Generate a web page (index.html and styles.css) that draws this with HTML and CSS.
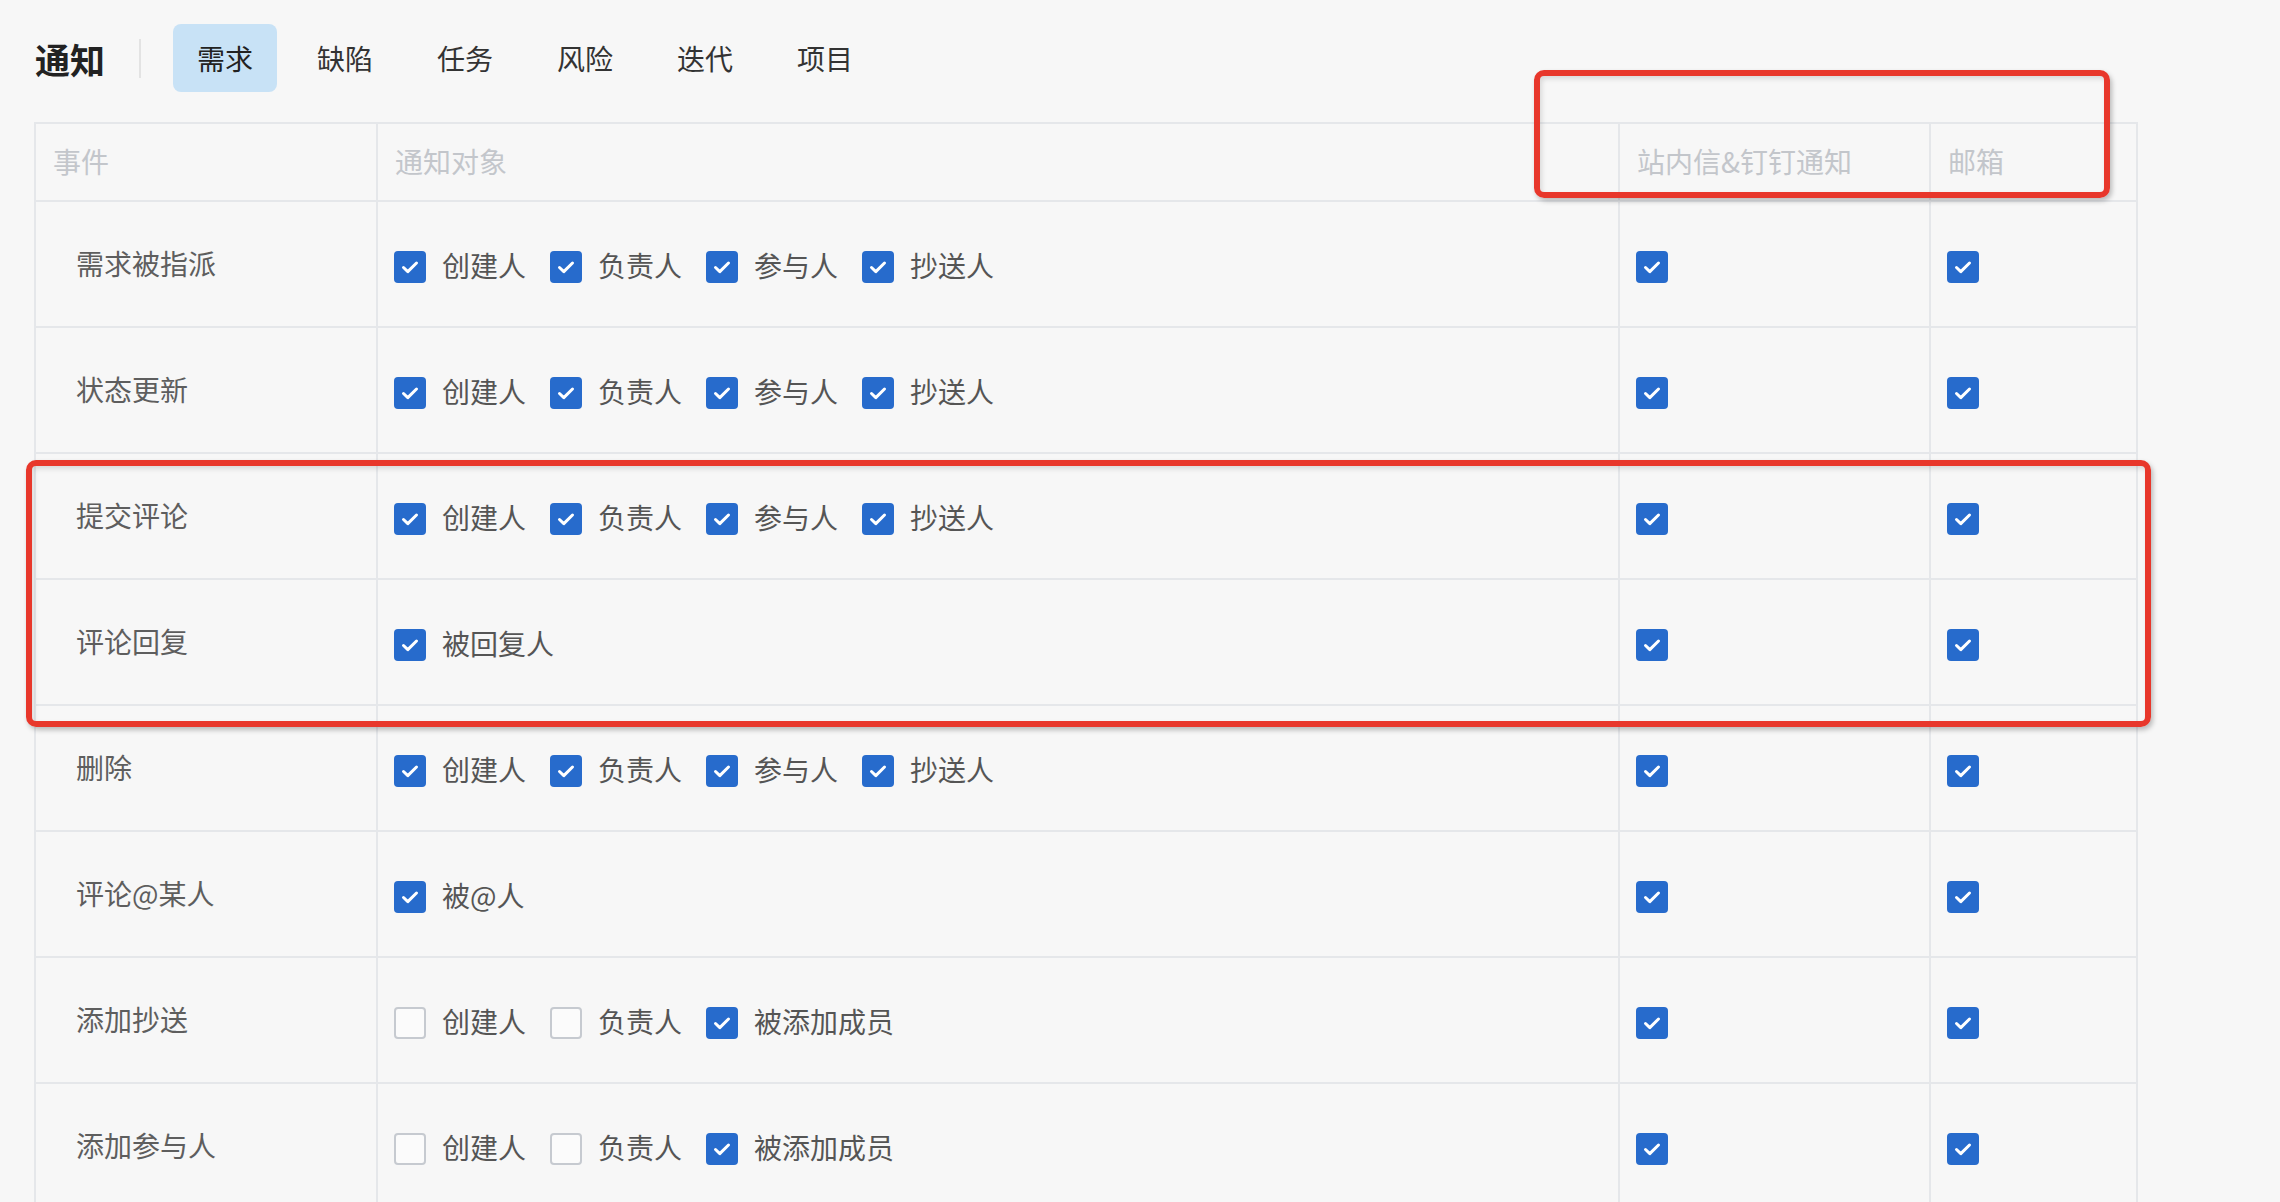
FILE: index.html
```html
<!DOCTYPE html>
<html lang="zh-CN">
<head>
<meta charset="utf-8">
<title>通知</title>
<link rel="stylesheet" href="styles.css">
</head>
<body>
<div class="page">
  <header class="topbar">
    <h1 class="title">通知</h1>
    <span class="divider"></span>
    <nav class="tabs">
      <span class="tab active">需求</span>
      <span class="tab">缺陷</span>
      <span class="tab">任务</span>
      <span class="tab">风险</span>
      <span class="tab">迭代</span>
      <span class="tab">项目</span>
    </nav>
  </header>

  <div class="grid">
    <div class="cell head">事件</div>
    <div class="cell head">通知对象</div>
    <div class="cell head">站内信&amp;钉钉通知</div>
    <div class="cell head">邮箱</div>

    <div class="cell event">需求被指派</div>
    <div class="cell targets">
      <label class="opt"><span class="cb on"></span>创建人</label>
      <label class="opt"><span class="cb on"></span>负责人</label>
      <label class="opt"><span class="cb on"></span>参与人</label>
      <label class="opt"><span class="cb on"></span>抄送人</label>
    </div>
    <div class="cell box"><span class="cb on"></span></div>
    <div class="cell box"><span class="cb on"></span></div>

    <div class="cell event">状态更新</div>
    <div class="cell targets">
      <label class="opt"><span class="cb on"></span>创建人</label>
      <label class="opt"><span class="cb on"></span>负责人</label>
      <label class="opt"><span class="cb on"></span>参与人</label>
      <label class="opt"><span class="cb on"></span>抄送人</label>
    </div>
    <div class="cell box"><span class="cb on"></span></div>
    <div class="cell box"><span class="cb on"></span></div>

    <div class="cell event">提交评论</div>
    <div class="cell targets">
      <label class="opt"><span class="cb on"></span>创建人</label>
      <label class="opt"><span class="cb on"></span>负责人</label>
      <label class="opt"><span class="cb on"></span>参与人</label>
      <label class="opt"><span class="cb on"></span>抄送人</label>
    </div>
    <div class="cell box"><span class="cb on"></span></div>
    <div class="cell box"><span class="cb on"></span></div>

    <div class="cell event">评论回复</div>
    <div class="cell targets">
      <label class="opt"><span class="cb on"></span>被回复人</label>
    </div>
    <div class="cell box"><span class="cb on"></span></div>
    <div class="cell box"><span class="cb on"></span></div>

    <div class="cell event">删除</div>
    <div class="cell targets">
      <label class="opt"><span class="cb on"></span>创建人</label>
      <label class="opt"><span class="cb on"></span>负责人</label>
      <label class="opt"><span class="cb on"></span>参与人</label>
      <label class="opt"><span class="cb on"></span>抄送人</label>
    </div>
    <div class="cell box"><span class="cb on"></span></div>
    <div class="cell box"><span class="cb on"></span></div>

    <div class="cell event">评论@某人</div>
    <div class="cell targets">
      <label class="opt"><span class="cb on"></span>被@人</label>
    </div>
    <div class="cell box"><span class="cb on"></span></div>
    <div class="cell box"><span class="cb on"></span></div>

    <div class="cell event">添加抄送</div>
    <div class="cell targets">
      <label class="opt"><span class="cb"></span>创建人</label>
      <label class="opt"><span class="cb"></span>负责人</label>
      <label class="opt"><span class="cb on"></span>被添加成员</label>
    </div>
    <div class="cell box"><span class="cb on"></span></div>
    <div class="cell box"><span class="cb on"></span></div>

    <div class="cell event">添加参与人</div>
    <div class="cell targets">
      <label class="opt"><span class="cb"></span>创建人</label>
      <label class="opt"><span class="cb"></span>负责人</label>
      <label class="opt"><span class="cb on"></span>被添加成员</label>
    </div>
    <div class="cell box"><span class="cb on"></span></div>
    <div class="cell box"><span class="cb on"></span></div>
  </div>

  <div class="mark mark-head"></div>
  <div class="mark mark-rows"></div>
</div>
</body>
</html>
```
FILE: styles.css
```css
* { box-sizing: border-box; }

html, body {
  margin: 0;
  height: 100%;
  overflow: hidden;
}

body {
  background: #f7f7f7;
  font-family: "Noto Sans CJK SC", "Noto Sans", sans-serif;
  color: #555;
}

.page {
  position: relative;
  padding: 24px 0 0 35px;
}

.topbar {
  display: flex;
  align-items: center;
  height: 68px;
}

.title {
  margin: 0;
  font-size: 35px;
  font-weight: 700;
  color: #222;
  line-height: 1;
}

.divider {
  width: 2px;
  height: 39px;
  background: #e3e3e3;
  margin: 0 32px 0 34px;
}

.tabs {
  display: flex;
  gap: 16px;
  height: 100%;
}

.tab {
  display: flex;
  align-items: center;
  padding: 0 24px;
  height: 68px;
  font-size: 28px;
  color: #333;
  border-radius: 8px;
}

.tab.active {
  background: #c8e2f6;
  color: #222;
}

.grid {
  margin: 30px 0 0 -1px;
  width: 2104px;
  display: grid;
  grid-template-columns: 342px 1242px 311px 1fr;
  grid-auto-rows: 126px;
  grid-template-rows: 78px;
  border-left: 2px solid #e5e7ea;
  border-top: 2px solid #e5e7ea;
}

.cell {
  border-right: 2px solid #e5e7ea;
  border-bottom: 2px solid #e5e7ea;
  display: flex;
  align-items: center;
  font-size: 28px;
  padding-left: 16px;
}

.cell.head {
  color: #c3c6cb;
  padding-left: 17px;
  padding-bottom: 2px;
}

.cell.event {
  padding-left: 40px;
  color: #5e5e5e;
  padding-bottom: 3px;
}

.targets {
  color: #555;
}

.opt {
  display: flex;
  align-items: center;
  margin-right: 24px;
  padding-top: 2px;
}

.cb {
  width: 32px;
  height: 32px;
  border-radius: 4px;
  border: 2px solid #c6cad0;
  background: #fbfbfb;
  margin: 4px 16px 0 0;
  flex: none;
  position: relative;
}

.box .cb { margin: 6px 0 0 0; }

.cb.on {
  border: none;
  background-color: #276bcc;
  background-image: url("data:image/svg+xml;utf8,<svg xmlns='http://www.w3.org/2000/svg' viewBox='0 0 32 32'><path d='M9.5 16.5 L13.8 20.6 L22.5 12' fill='none' stroke='white' stroke-width='3' stroke-linecap='round' stroke-linejoin='round'/></svg>");
  background-size: 32px 32px;
}

.mark {
  position: absolute;
  border: 6px solid #e8372b;
  border-radius: 10px;
  box-shadow: 2px 3px 5px rgba(0, 0, 0, 0.25), inset 2px 3px 5px rgba(0, 0, 0, 0.12);
  pointer-events: none;
}

.mark-head {
  left: 1534px;
  top: 70px;
  width: 576px;
  height: 128px;
}

.mark-rows {
  left: 26px;
  top: 460px;
  width: 2125px;
  height: 267px;
}
```
